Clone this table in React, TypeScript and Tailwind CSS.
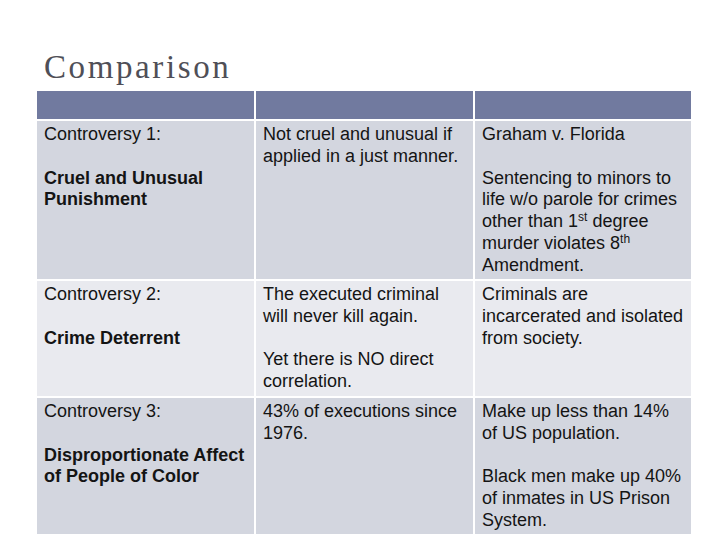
import React from "react";

type Line = string | React.ReactNode;

function Lines({ paras, bold }: { paras: Line[][]; bold?: number[] }) {
  return (
    <>
      {paras.map((p, i) => (
        <div key={i} className={i > 0 ? "mt-[21.8px]" : ""}>
          {p.map((l, j) => (
            <div
              key={j}
              className={`whitespace-nowrap ${bold && bold.includes(i) ? "font-bold" : ""}`}
            >
              {l}
            </div>
          ))}
        </div>
      ))}
    </>
  );
}

export default function App() {
  const cellBase =
    "px-[7px] pt-[3px] text-[18px] leading-[21.8px] text-[#141414] overflow-hidden";
  const odd = "bg-[#d3d6df]";
  const even = "bg-[#e9eaef]";
  return (
    <div
      className="w-[728px] h-[546px] bg-white overflow-hidden"
      style={{ fontFamily: '"Liberation Sans", Arial, sans-serif' }}
    >
      <div className="h-[91px] pt-[51px] pl-[44px]">
        <div
          className="text-[33px] leading-[33px] tracking-[2.6px] text-[#4f4f57]"
          style={{ fontFamily: '"Liberation Serif", "Times New Roman", serif' }}
        >
          Comparison
        </div>
      </div>
      <div className="ml-[37px] grid grid-cols-[217px_217px_216px] grid-rows-[28px_158px_115px_136px] gap-[2px]">
        <div className="bg-[#717a9f]" />
        <div className="bg-[#717a9f]" />
        <div className="bg-[#717a9f]" />

        <div className={`${cellBase} ${odd}`}>
          <Lines paras={[["Controversy 1:"], ["Cruel and Unusual", "Punishment"]]} bold={[1]} />
        </div>
        <div className={`${cellBase} ${odd}`}>
          <Lines paras={[["Not cruel and unusual if", "applied in a just manner."]]} />
        </div>
        <div className={`${cellBase} ${odd}`}>
          <Lines
            paras={[
              ["Graham v. Florida"],
              [
                "Sentencing to minors to",
                "life w/o parole for crimes",
                <>
                  other than 1<sup className="text-[12px]">st</sup> degree
                </>,
                <>
                  murder violates 8<sup className="text-[12px]">th</sup>
                </>,
                "Amendment.",
              ],
            ]}
          />
        </div>

        <div className={`${cellBase} ${even}`}>
          <Lines paras={[["Controversy 2:"], ["Crime Deterrent"]]} bold={[1]} />
        </div>
        <div className={`${cellBase} ${even}`}>
          <Lines
            paras={[
              ["The executed criminal", "will never kill again."],
              ["Yet there is NO direct", "correlation."],
            ]}
          />
        </div>
        <div className={`${cellBase} ${even}`}>
          <Lines paras={[["Criminals are", "incarcerated and isolated", "from society."]]} />
        </div>

        <div className={`${cellBase} ${odd}`}>
          <Lines
            paras={[["Controversy 3:"], ["Disproportionate Affect", "of People of Color"]]}
            bold={[1]}
          />
        </div>
        <div className={`${cellBase} ${odd}`}>
          <Lines paras={[["43% of executions since", "1976."]]} />
        </div>
        <div className={`${cellBase} ${odd}`}>
          <Lines
            paras={[
              ["Make up less than 14%", "of US population."],
              ["Black men make up 40%", "of inmates in US Prison", "System."],
            ]}
          />
        </div>
      </div>
    </div>
  );
}
